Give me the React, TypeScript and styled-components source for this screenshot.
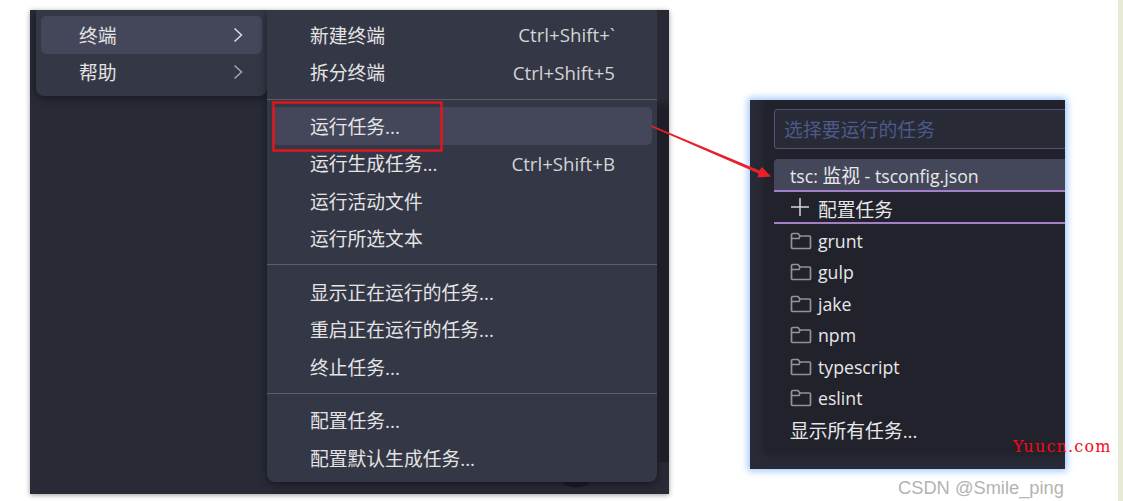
import React from "react";
import styled, { createGlobalStyle } from "styled-components";

const GlobalStyle = createGlobalStyle`
	html, body {
		margin: 0;
		padding: 0;
		background: #ffffff;
	}
`;

const Page = styled.div`
	position: relative;
	display: flex;
	align-items: flex-start;
	width: 1123px;
	height: 501px;
	padding: 10px 0 0 30px;
	box-sizing: border-box;
	overflow: hidden;
	background: #ffffff;
	font-family: "Open Sans", "Noto Sans CJK SC", sans-serif;
`;

const EdgeStripe = styled.div`
	position: absolute;
	top: 0;
	right: 0;
	width: 5px;
	height: 100%;
	background: #e7ead6;
`;

const Editor = styled.div`
	display: flex;
	align-items: flex-start;
	flex: none;
	width: 639px;
	height: 484px;
	padding-left: 6px;
	box-sizing: border-box;
	overflow: hidden;
	background: radial-gradient(15px 6px at 546px 472px, #1c1d26 85%, transparent), #282a36;
	box-shadow: 0 1px 5px rgba(0, 0, 0, 0.4);
`;

const Menu = styled.div<{ $width: number; $height: number }>`
	display: flex;
	flex-direction: column;
	flex: none;
	width: ${(p) => p.$width}px;
	height: ${(p) => p.$height}px;
	padding: 6px 5px 0;
	box-sizing: border-box;
	background: #343746;
	border-radius: 0 0 8px 8px;
	box-shadow: 0 2px 10px rgba(0, 0, 0, 0.45);
`;

const Gutter = styled.div`
	flex: 1;
	height: 452px;
	background: linear-gradient(#272934 0 88px, #1d1e27 100px);
`;

const Row = styled.div<{ $active?: boolean; $right: number }>`
	display: flex;
	align-items: center;
	justify-content: space-between;
	flex: none;
	height: 37.5px;
	padding: 0 ${(p) => p.$right}px 0 38px;
	border-radius: 5px;
	background: ${(p) => (p.$active ? "#44475a" : "transparent")};
	color: #e4e4e4;
	font-size: 18.8px;
	white-space: nowrap;
`;

const Shortcut = styled.span`
	color: #d4d4d4;
	font-size: 18.7px;
`;

const Divider = styled.div<{ $first?: boolean }>`
	flex: none;
	height: 1px;
	margin: ${(p) => (p.$first ? "8px -5px 7px" : "7px -5px 8px")};
	background: #5e5f66;
`;

const Palette = styled.div`
	display: flex;
	flex: none;
	width: 315px;
	height: 369px;
	margin: 90px 0 0 81px;
	padding: 0 0 15px 15px;
	box-sizing: border-box;
	overflow: hidden;
	background: #282a36;
	box-shadow: 0 0 7px 2px rgba(90, 160, 250, 0.6);
`;

const QuickPick = styled.div`
	display: flex;
	flex-direction: column;
	flex: 1;
	min-width: 0;
	padding: 9px 0 0 9px;
	overflow: hidden;
	background: #21222c;
	box-shadow: 0 0 9px rgba(0, 0, 0, 0.35);
`;

const SearchBox = styled.div`
	display: flex;
	align-items: center;
	flex: none;
	width: 320px;
	height: 40px;
	margin-bottom: 10px;
	padding-left: 9px;
	box-sizing: border-box;
	border: 1px solid #4f5675;
	border-radius: 3px;
	background: #282a36;
	color: #4c5a8a;
	font-size: 18.9px;
`;

const Option = styled.div<{ $kind?: "active" | "action" }>`
	display: flex;
	align-items: center;
	gap: 6px;
	flex: none;
	width: 320px;
	height: ${(p) => (p.$kind === "active" ? 33 : p.$kind === "action" ? 32 : 31.5)}px;
	padding: ${(p) => (p.$kind === "action" ? "3px" : p.$kind ? "0" : "2px")} 0 0 16px;
	box-sizing: border-box;
	border-radius: ${(p) => (p.$kind === "active" ? "4px 0 0 0" : "0")};
	border-bottom: ${(p) => (p.$kind ? "2px solid #a37fc8" : "none")};
	background: ${(p) => (p.$kind === "active" ? "#44475a" : "transparent")};
	color: #e8e8e8;
	font-size: 17.7px;
	white-space: nowrap;
`;

const Han = styled.span`
	font-size: 18.8px;
`;

const FolderSvg = styled.svg`
	flex: none;
`;

const PlusSvg = styled.svg`
	flex: none;
	margin-bottom: 3px;
`;

const Annotation = styled.svg`
	position: absolute;
	top: 0;
	left: 0;
	pointer-events: none;
`;

const Watermark = styled.div`
	position: absolute;
	left: 898px;
	top: 476px;
	color: #b3b3b3;
	font-family: "Liberation Sans", sans-serif;
	font-size: 18.3px;
	line-height: 24px;
	white-space: nowrap;
`;

const SiteMark = styled.div`
	position: absolute;
	left: 1013px;
	top: 437px;
	color: #f50a14;
	font-family: "DejaVu Serif", serif;
	font-size: 16px;
	line-height: 20px;
	letter-spacing: 1.2px;
	white-space: nowrap;
`;

const Chevron: React.FC<{ $dim?: boolean }> = ({ $dim }) => (
	<svg width="12" height="16" viewBox="0 0 12 16" fill="none">
		<path d="M2.5 1.5 L9.5 8 L2.5 14.5" stroke={$dim ? "#a5a6ab" : "#dcdde0"} strokeWidth="1.5" />
	</svg>
);

const FolderIcon: React.FC = () => (
	<FolderSvg width="22" height="18" viewBox="0 0 22 18" fill="none">
		<path
			d="M1.5 3 C1.5 2 2 1.5 3 1.5 H8 L10 4 H19.5 C20.2 4 20.5 4.4 20.5 5 V15.5 C20.5 16.2 20.2 16.5 19.5 16.5 H2.5 C1.8 16.5 1.5 16.2 1.5 15.5 Z M1.5 6.5 H9 L10 4"
			stroke="#949494"
			strokeWidth="1.7"
		/>
	</FolderSvg>
);

const PlusIcon: React.FC = () => (
	<PlusSvg width="22" height="20" viewBox="0 0 22 20" fill="none">
		<path d="M10 1 V19 M1 10 H19" stroke="#d8d8d8" strokeWidth="1.5" />
	</PlusSvg>
);

const folders = ["grunt", "gulp", "jake", "npm", "typescript", "eslint"];

const App: React.FC = () => (
	<Page>
		<GlobalStyle />
		<Editor>
			<Menu $width={231} $height={86}>
				<Row $right={18} $active>
					终端
					<Chevron />
				</Row>
				<Row $right={18}>
					帮助
					<Chevron $dim />
				</Row>
			</Menu>
			<Menu $width={390} $height={472}>
				<Row $right={37}>
					新建终端
					<Shortcut>Ctrl+Shift+`</Shortcut>
				</Row>
				<Row $right={37}>
					拆分终端
					<Shortcut>Ctrl+Shift+5</Shortcut>
				</Row>
				<Divider $first />
				<Row $right={37} $active>运行任务...</Row>
				<Row $right={37}>
					运行生成任务...
					<Shortcut>Ctrl+Shift+B</Shortcut>
				</Row>
				<Row $right={37}>运行活动文件</Row>
				<Row $right={37}>运行所选文本</Row>
				<Divider />
				<Row $right={37}>显示正在运行的任务...</Row>
				<Row $right={37}>重启正在运行的任务...</Row>
				<Row $right={37}>终止任务...</Row>
				<Divider />
				<Row $right={37}>配置任务...</Row>
				<Row $right={37}>配置默认生成任务...</Row>
			</Menu>
			<Gutter />
		</Editor>
		<Palette>
			<QuickPick>
				<SearchBox>选择要运行的任务</SearchBox>
				<Option $kind="active">
					<span>tsc: <Han>监视</Han> - tsconfig.json</span>
				</Option>
				<Option $kind="action">
					<PlusIcon />
					<Han>配置任务</Han>
				</Option>
				{folders.map((name) => (
					<Option key={name}>
						<FolderIcon />
						{name}
					</Option>
				))}
				<Option>
					<Han>显示所有任务...</Han>
				</Option>
			</QuickPick>
		</Palette>
		<EdgeStripe />
		<Annotation width="1123" height="501" viewBox="0 0 1123 501">
			<rect x="273.5" y="102.5" width="168" height="48" fill="none" stroke="#e8141c" strokeWidth="2.4" />
			<path d="M652 125.5 L759.5 170.5 L762 167 L771 176.5 L757.5 177.5 L758.5 173.5 L651.5 127 Z" fill="#e8202a" />
		</Annotation>
		<SiteMark>Yuucn.com</SiteMark>
		<Watermark>CSDN @Smile_ping</Watermark>
	</Page>
);

export default App;
